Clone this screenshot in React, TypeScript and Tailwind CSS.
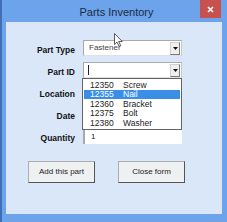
const parts = [
  { id: "12350", name: "Screw" },
  { id: "12355", name: "Nail" },
  { id: "12360", name: "Bracket" },
  { id: "12375", name: "Bolt" },
  { id: "12380", name: "Washer" },
];

function DropButton() {
  return (
    <div className="w-[10px] h-[13px] mr-[1px] bg-[#efefef] border border-[#d0d0d0] border-r-[#7a7a7a] border-b-[#7a7a7a] flex items-center justify-center">
      <svg width="5" height="3" viewBox="0 0 5 3">
        <path d="M0 0h5L2.5 3z" fill="#111" />
      </svg>
    </div>
  );
}

function Field({ label, children }: { label: string; children?: React.ReactNode }) {
  return (
    <div className="flex items-center h-[16px]">
      <div className="w-[69px] text-right font-bold text-[8.5px] text-[#111] pt-[5px]">{label}</div>
      <div className="ml-[8px] w-[99px] h-[16px] relative">{children}</div>
    </div>
  );
}

export default function App() {
  return (
    <div className="w-[227px] h-[222px] bg-[#6ca3ea] border-l-2 border-[#3f6fb5] flex flex-col font-['Liberation_Sans',Arial,sans-serif] relative overflow-hidden">
      <div className="h-[22px] flex items-start relative">
        <div className="flex-1 text-center text-[11px] text-[#1c2a44] pt-[4px] pl-[4px]">Parts Inventory</div>
        <div className="absolute right-[6px] top-0 w-[21px] h-[18px] bg-[#c8504f] flex items-center justify-center">
          <svg width="7" height="7" viewBox="0 0 7 7">
            <path d="M1 1l5 5M6 1l-5 5" stroke="#fff" strokeWidth="1.6" />
          </svg>
        </div>
      </div>
      <div className="ml-[4px] mr-[5px] h-[192px] bg-[#dae7f9] flex flex-col relative">
        <div className="flex flex-col gap-[6px] pt-[18px]">
          <Field label="Part Type">
            <div className="h-full bg-white border border-[#a9a9a9] border-r-[#c8c8c8] border-b-[#e0e0e0] flex items-center justify-between">
              <span className="text-[8px] text-[#444] pl-[5px]">Fastener</span>
              <DropButton />
            </div>
          </Field>
          <Field label="Part ID">
            <div className="h-full bg-white border border-[#a9a9a9] border-r-[#c8c8c8] border-b-[#e0e0e0] flex items-center justify-between">
              <span className="w-px h-[10px] bg-[#222] ml-[4px]" />
              <DropButton />
            </div>
            <div className="absolute left-[-1px] top-[16px] w-[100px] bg-white border border-[#646464] py-[1px] z-10">
              {parts.map((p) => (
                <div
                  key={p.id}
                  className={`flex h-[9.5px] items-center text-[8.5px] leading-none ${
                    p.id === "12355" ? "bg-[#3a8ee6] text-white mx-[1px]" : "text-[#222]"
                  }`}
                >
                  <span className={p.id === "12355" ? "w-[39px] pl-[6px]" : "w-[40px] pl-[7px]"}>{p.id}</span>
                  <span>{p.name}</span>
                </div>
              ))}
            </div>
          </Field>
          <Field label="Location" />
          <Field label="Date" />
          <Field label="Quantity">
            <div className="h-full bg-white border-t-2 border-l-2 border-[#a9a9a9] flex items-center">
              <span className="text-[8px] text-[#222] pl-[6px]">1</span>
            </div>
          </Field>
        </div>
        <div className="flex gap-[23px] pl-[22px] mt-[17px]">
          <div className="w-[67px] h-[22px] bg-[#eef0f2] border border-[#adadad] border-r-[#555] border-b-[#555] flex items-center justify-center text-[8px] text-[#222]">
            Add this part
          </div>
          <div className="w-[67px] h-[22px] bg-[#eef0f2] border border-[#adadad] border-r-[#555] border-b-[#555] flex items-center justify-center text-[8px] text-[#222]">
            Close form
          </div>
        </div>
      </div>
      <svg className="absolute left-[112px] top-[33px]" width="9" height="14" viewBox="0 0 9 14">
        <path d="M0.5 0.5v11l2.6-2.4 2 4.2 1.6-0.8-2-4h3.6z" fill="#fff" stroke="#333" strokeWidth="0.8" />
      </svg>
    </div>
  );
}
